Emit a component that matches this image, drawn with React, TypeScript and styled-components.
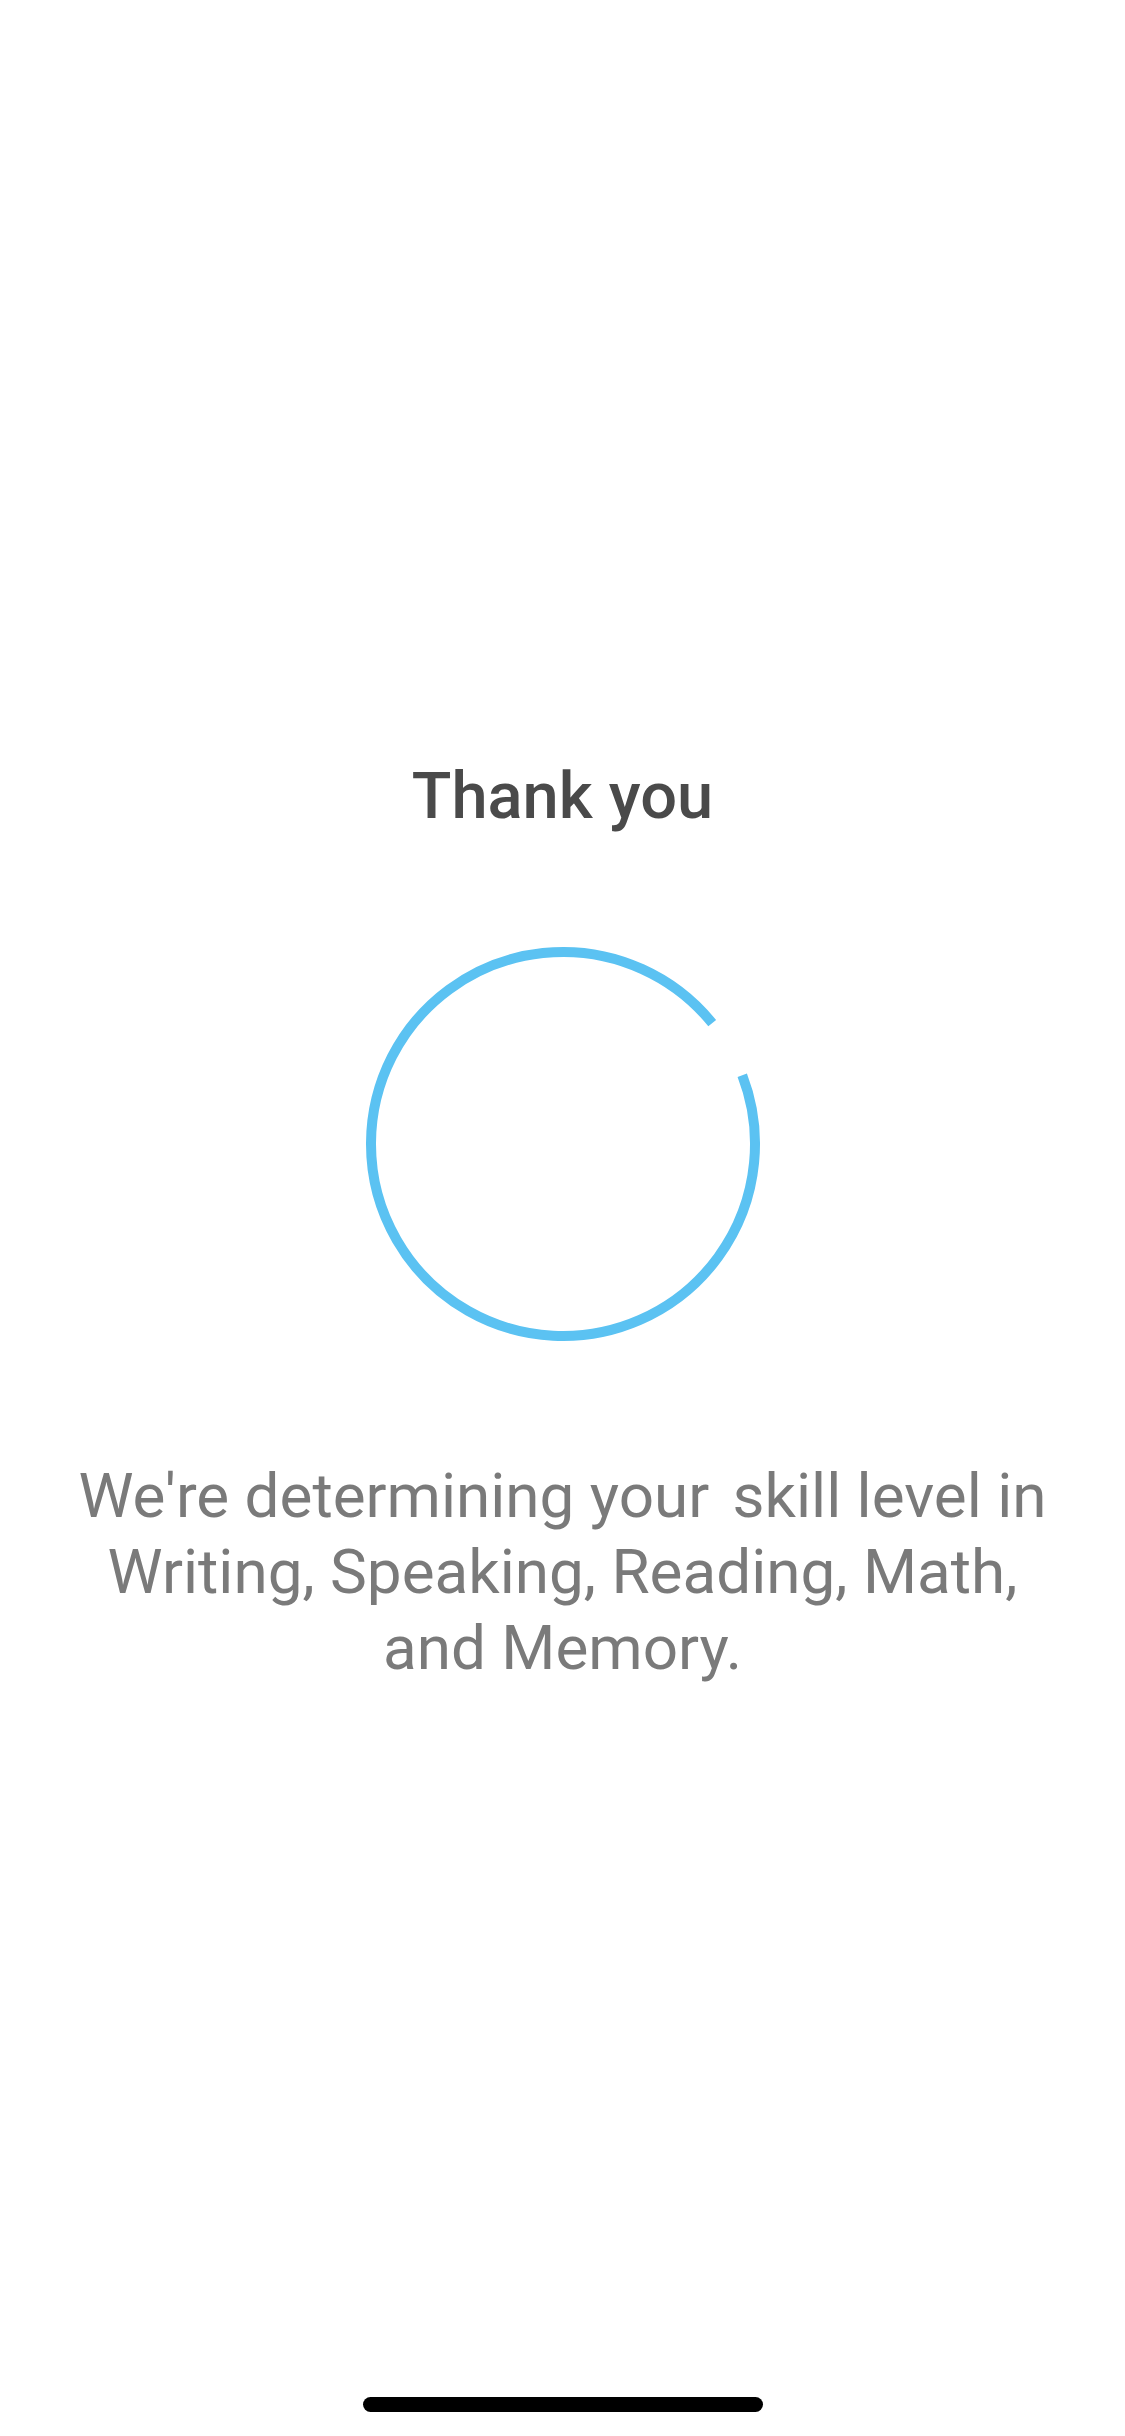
import styled, { createGlobalStyle } from "styled-components";

const GlobalStyle = createGlobalStyle`
  html, body {
    margin: 0;
    padding: 0;
    background: #ffffff;
  }
  body {
    font-family: Roboto, "Liberation Sans", Arial, sans-serif;
  }
`;

const Screen = styled.main`
  width: 1125px;
  min-height: 2436px;
  display: flex;
  flex-direction: column;
  align-items: center;
  background: #ffffff;
  box-sizing: border-box;
`;

const Title = styled.h1`
  margin: 756px 0 0;
  font-size: 65px;
  line-height: 80px;
  font-weight: 500;
  color: #4a4a4a;
`;

const Spinner = styled.svg`
  display: block;
  margin-top: 108px;
  width: 400px;
  height: 400px;
`;

const Message = styled.p`
  margin: 114px 0 0;
  font-size: 62px;
  line-height: 76px;
  font-weight: 400;
  color: #7a7a7a;
  text-align: center;
`;

const WideGap = styled.span`
  display: inline-block;
  width: 8px;
`;

const HomeIndicator = styled.div`
  margin-top: auto;
  margin-bottom: 24px;
  width: 400px;
  height: 15px;
  border-radius: 8px;
  background: #000000;
`;

// arc from -21deg clockwise round to -39deg, leaving a small gap top-right
function arcPath(r: number, c: number, fromDeg: number, toDeg: number) {
  const rad = (d: number) => (d * Math.PI) / 180;
  const x1 = c + r * Math.cos(rad(fromDeg));
  const y1 = c + r * Math.sin(rad(fromDeg));
  const x2 = c + r * Math.cos(rad(toDeg));
  const y2 = c + r * Math.sin(rad(toDeg));
  return `M ${x1} ${y1} A ${r} ${r} 0 1 1 ${x2} ${y2}`;
}

export default function App() {
  return (
    <>
      <GlobalStyle />
      <Screen>
        <Title>Thank you</Title>
        <Spinner viewBox="0 0 400 400">
          <path
            d={arcPath(192, 200, -21, -39)}
            fill="none"
            stroke="#5bc2f2"
            strokeWidth={10}
            strokeLinecap="butt"
          />
        </Spinner>
        <Message>
          We're determining your
          <WideGap /> skill level in
          <br />
          Writing, Speaking, Reading, Math,
          <br />
          and Memory.
        </Message>
        <HomeIndicator />
      </Screen>
    </>
  );
}
